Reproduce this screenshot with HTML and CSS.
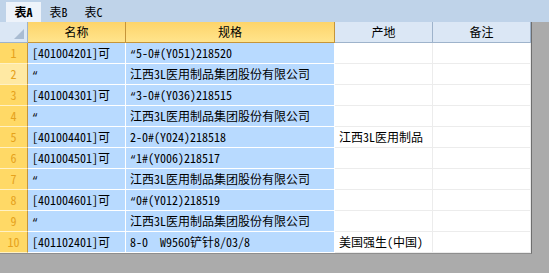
FILE: index.html
```html
<!DOCTYPE html>
<html lang="zh-CN">
<head>
  <meta charset="UTF-8">
  <title>表格</title>
  <link rel="stylesheet" href="styles.css">
</head>
<body>
  <div class="tabs">
    <span class="tab active">表A</span>
    <span class="tab">表B</span>
    <span class="tab">表C</span>
  </div>

  <div class="sheet">
    <div class="grid">
      <!-- header row -->
      <div class="cell corner"><span class="corner-mark"></span></div>
      <div class="cell col-head sel">名称</div>
      <div class="cell col-head sel">规格</div>
      <div class="cell col-head">产地</div>
      <div class="cell col-head">备注</div>

      <div class="cell row-head">1</div>
      <div class="cell sel">[401004201]可</div>
      <div class="cell sel"><span class="q">“</span>5-0#(Y051)218520</div>
      <div class="cell"></div>
      <div class="cell"></div>

      <div class="cell row-head current">2</div>
      <div class="cell sel"><span class="q">“</span></div>
      <div class="cell sel">江西3L医用制品集团股份有限公司</div>
      <div class="cell"></div>
      <div class="cell"></div>

      <div class="cell row-head">3</div>
      <div class="cell sel">[401004301]可</div>
      <div class="cell sel"><span class="q">“</span>3-0#(Y036)218515</div>
      <div class="cell"></div>
      <div class="cell"></div>

      <div class="cell row-head">4</div>
      <div class="cell sel"><span class="q">“</span></div>
      <div class="cell sel">江西3L医用制品集团股份有限公司</div>
      <div class="cell"></div>
      <div class="cell"></div>

      <div class="cell row-head">5</div>
      <div class="cell sel">[401004401]可</div>
      <div class="cell sel">2-0#(Y024)218518</div>
      <div class="cell">江西3L医用制品</div>
      <div class="cell"></div>

      <div class="cell row-head">6</div>
      <div class="cell sel">[401004501]可</div>
      <div class="cell sel"><span class="q">“</span>1#(Y006)218517</div>
      <div class="cell"></div>
      <div class="cell"></div>

      <div class="cell row-head">7</div>
      <div class="cell sel"><span class="q">“</span></div>
      <div class="cell sel">江西3L医用制品集团股份有限公司</div>
      <div class="cell"></div>
      <div class="cell"></div>

      <div class="cell row-head">8</div>
      <div class="cell sel">[401004601]可</div>
      <div class="cell sel"><span class="q">“</span>0#(Y012)218519</div>
      <div class="cell"></div>
      <div class="cell"></div>

      <div class="cell row-head">9</div>
      <div class="cell sel"><span class="q">“</span></div>
      <div class="cell sel">江西3L医用制品集团股份有限公司</div>
      <div class="cell"></div>
      <div class="cell"></div>

      <div class="cell row-head">10</div>
      <div class="cell sel">[401102401]可</div>
      <div class="cell sel">8-0&nbsp; W9560铲针8/03/8</div>
      <div class="cell">美国强生(中国)</div>
      <div class="cell"></div>
    </div>
  </div>
</body>
</html>
```

FILE: styles.css
```css
:root {
  --tab-bar: #bfd3e9;
  --head-blue: #dbe7f5;
  --head-line: #9eb3cb;
  --head-gold-top: #fdd46a;
  --head-gold-bottom: #ffe48c;
  --gold-line: #c5953a;
  --row-gold: #ffd966;
  --row-num: #e6a21c;
  --selected: #b8daff;
  --grid-line: #ececec;
  --outside: #ababab;
}

body {
  margin: 0;
  background: var(--outside);
  font-family: "Noto Sans Mono CJK SC", "Noto Sans CJK SC", sans-serif;
  font-size: 12px;
  color: #000;
}

/* sheet tabs */
.tabs {
  height: 22px;
  background: var(--tab-bar);
  display: flex;
  align-items: flex-end;
  padding-left: 6px;
}

.tab {
  width: 35px;
  height: 20px;
  line-height: 20px;
  text-align: center;
}

.tab.active {
  background: #eef3fa;
  font-weight: bold;
}

/* grid */
.sheet {
  width: 531px;
  border-right: 1px solid #6e6e6e;
  border-bottom: 1px solid #8e8e8e;
  background: #fff;
}

.grid {
  display: grid;
  grid-template-columns: 28px 98px 209px 98px 98px;
  grid-auto-rows: 21px;
}

.cell {
  box-sizing: border-box;
  border-right: 1px solid var(--grid-line);
  border-bottom: 1px solid var(--grid-line);
  padding: 0 4px;
  line-height: 20px;
  white-space: nowrap;
  overflow: hidden;
}

/* narrow ditto quote, half width like the other latin glyphs */
.q {
  font-family: "Liberation Mono", monospace;
  font-size: 10px;
}

.cell.sel {
  background: var(--selected);
  border-color: #fff;
}

.col-head {
  text-align: center;
  background: var(--head-blue);
  border-right: 1px solid var(--head-line);
  border-bottom: 1px solid var(--head-line);
}

.col-head.sel {
  background: linear-gradient(180deg, var(--head-gold-top), var(--head-gold-bottom));
  border-right: 1px solid var(--gold-line);
  border-bottom: 1px solid var(--gold-line);
}

.corner {
  position: relative;
  background: var(--head-blue);
  border-right: 1px solid var(--head-line);
  border-bottom: 1px solid var(--head-line);
}

.corner-mark {
  position: absolute;
  right: 3px;
  bottom: 3px;
  width: 0;
  height: 0;
  border-left: 10px solid transparent;
  border-bottom: 10px solid #a9bcd2;
}

.row-head {
  padding: 0;
  text-align: center;
  color: var(--row-num);
  background: var(--row-gold);
  border-right: 1px solid var(--gold-line);
  border-bottom: 1px solid #fff1c4;
}

.row-head.current {
  background: #ffe9a3;
}
```
